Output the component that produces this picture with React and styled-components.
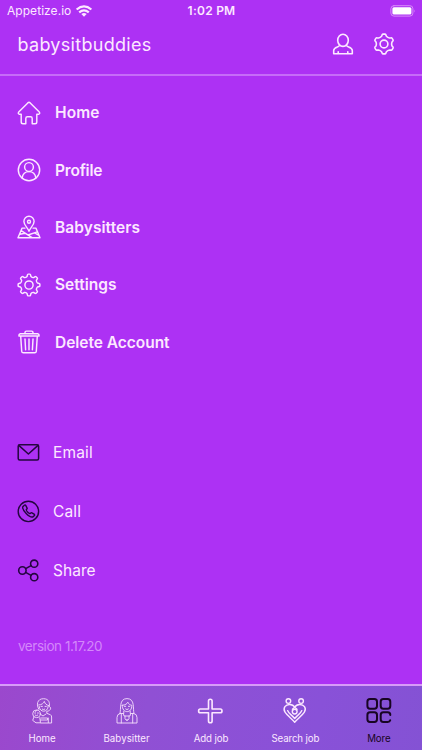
import React from 'react';
import styled, { createGlobalStyle } from 'styled-components';

const GlobalStyle = createGlobalStyle`
  * { box-sizing: border-box; }
  body { margin: 0; background: #ad31f4; }
`;

const Screen = styled.div`
  width: 100%;
  height: 750px;
  display: flex;
  flex-direction: column;
  overflow: hidden;
  background: #ad31f4;
  color: #fce8ff;
  font-family: Inter, "Open Sans", sans-serif;
`;

const StatusBar = styled.header`
  height: 22px;
  flex: none;
  display: grid;
  grid-template-columns: 1fr auto 1fr;
  align-items: center;
  padding: 0 6px 0 7px;
  font-size: 12px;
  line-height: 22px;
`;

const Carrier = styled.div`
  display: flex;
  align-items: center;
  gap: 5px;
  letter-spacing: 0.05px;
  svg { margin-bottom: 1px; }
`;

const Clock = styled.div`
  font-weight: 600;
  letter-spacing: 0.25px;
`;

const Battery = styled.div`
  display: flex;
  justify-content: flex-end;
`;

const Header = styled.div`
  height: 54px;
  flex: none;
  display: flex;
  align-items: center;
  justify-content: space-between;
  padding: 0 26px 8px 17.5px;
  border-bottom: 2px solid #c66cf8;
`;

const Title = styled.h1`
  margin: 0;
  font-size: 18px;
  font-weight: 400;
  letter-spacing: ${(p) => p.$tracking}px;
`;

const HeaderActions = styled.div`
  display: flex;
  gap: 17px;
`;

const Menu = styled.nav`
  display: flex;
  flex-direction: column;
  padding: 8px 17px 0;
`;

const MenuItem = styled.a`
  display: flex;
  align-items: center;
  gap: 14px;
  height: 57.4px;
  font-size: 15.5px;
  font-weight: 600;
  letter-spacing: ${(p) => p.$tracking}px;
`;

const Contacts = styled.div`
  display: flex;
  flex-direction: column;
  margin-top: 52px;
  padding: 0 17px;
`;

const ContactItem = styled.a`
  display: flex;
  align-items: center;
  gap: 13px;
  height: 59px;
  font-size: 15.5px;
  letter-spacing: ${(p) => p.$tracking}px;
  svg { color: #24063f; }
`;

const Version = styled.div`
  margin: auto 18px 28px;
  font-size: 13.5px;
  line-height: 20px;
  color: #d487fa;
  letter-spacing: ${(p) => p.$tracking}px;
`;

const TabBar = styled.footer`
  height: 66px;
  flex: none;
  display: grid;
  grid-template-columns: repeat(5, 1fr);
  border-top: 2px solid #d79bf8;
  background: linear-gradient(100deg, #9b48cd 0%, #9050d4 35%, #8951d8 75%, #8452d4 100%);
`;

const Tab = styled.a`
  display: flex;
  flex-direction: column;
  align-items: center;
  padding-top: 10px;
  gap: 6px;
  font-size: 9.7px;
  line-height: 14px;
  letter-spacing: ${(p) => p.$tracking}px;
  color: ${(p) => (p.$active ? '#180523' : '#fce8ff')};
  padding-right: ${(p) => (p.$active ? 2 : 0)}px;
  svg { height: 30px; }
`;

const Icon = styled.svg.attrs({ fill: 'none', stroke: 'currentColor', strokeLinecap: 'round', strokeLinejoin: 'round' })`
  display: block;
  flex: none;
  overflow: visible;
`;

function gearPath(teeth, outer, inner, c = 12) {
  const step = (Math.PI * 2) / teeth;
  const pt = (r, a) => `${(c + r * Math.sin(a)).toFixed(2)} ${(c - r * Math.cos(a)).toFixed(2)}`;
  let d = '';
  for (let i = 0; i < teeth; i += 1) {
    const a = i * step;
    d += `${i ? 'L' : 'M'}${pt(inner, a - step * 0.29)}`;
    d += `L${pt(outer - 0.6, a - step * 0.19)}Q${pt(outer, a - step * 0.17)} ${pt(outer, a - step * 0.1)}`;
    d += `L${pt(outer, a + step * 0.1)}Q${pt(outer, a + step * 0.17)} ${pt(outer - 0.6, a + step * 0.19)}`;
    d += `L${pt(inner, a + step * 0.29)}Q${pt(inner - 0.8, a + step * 0.5)} ${pt(inner, a + step * 0.71)}`;
  }
  return `${d}Z`;
}

const WifiIcon = () => (
  <Icon width="16" height="12" viewBox="0 0 15 11" strokeWidth="2.1">
    <path d="M.6 4.1Q7.5-1.8 14.4 4.1M3 6.8Q7.5 3 12 6.8" strokeLinecap="butt" />
    <path d="M5 8.4Q7.5 6.3 10 8.4L7.5 11Z" fill="currentColor" stroke="none" />
  </Icon>
);
const BatteryIcon = () => (
  <Icon width="26" height="12" viewBox="0 0 26 12">
    <rect x=".9" y=".7" width="22" height="10.4" rx="3" stroke="#d88bfa" />
    <rect x="2.4" y="2.2" width="19" height="7.4" rx="1.5" fill="#fff" stroke="none" />
    <path d="M24.2 4.4Q25.5 5.9 24.2 7.4Z" fill="#d88bfa" stroke="none" />
  </Icon>
);
const PersonIcon = () => (
  <Icon width="24" height="24" viewBox="0 0 24 24" strokeWidth="1.6">
    <ellipse cx="12" cy="8.3" rx="5.3" ry="6.1" />
    <path d="M8.3 13.7C8 15.2 2.7 15 2.7 18.6V21.8H21.3V18.6C21.3 15 16 15.2 15.7 13.7M7.2 19.8V21.6M16.8 19.8V21.6" />
  </Icon>
);
const CogIcon = () => (
  <Icon width="24" height="24" viewBox="0 0 24 24" strokeWidth="1.6">
    <path d={gearPath(6, 9.9, 8.1)} /><circle cx="12" cy="12" r="3.9" />
  </Icon>
);
const HomeIcon = () => (
  <Icon width="24" height="24" viewBox="0 0 24 24" strokeWidth="1.45">
    <path d="M4.2 13.3H2.4Q.5 12.6 1.7 11.1L10.8 1.9Q12 .8 13.2 1.9L22.3 11.1Q23.5 12.6 21.6 13.3H19.8V21Q19.8 22.8 18 22.8H15.2V17.4Q15.2 15.8 13.6 15.8H10.4Q8.8 15.8 8.8 17.4V22.8H6Q4.2 22.8 4.2 21Z" />
  </Icon>
);
const ProfileIcon = () => (
  <Icon width="24" height="24" viewBox="0 0 24 24" strokeWidth="1.45">
    <circle cx="12" cy="12" r="10.7" /><circle cx="12" cy="9" r="4.4" />
    <path d="M5.1 20.1C5.7 15.9 8.1 13.6 12 13.6S18.3 15.9 18.9 20.1" />
  </Icon>
);
const MapIcon = () => (
  <Icon width="24" height="24" viewBox="0 0 24 24" strokeWidth="1.4">
    <path d="M12 16.3C10.8 13 6.9 10.1 6.9 6.4A5.1 5.1 0 0 1 17.1 6.4C17.1 10.1 13.2 13 12 16.3Z" />
    <circle cx="12" cy="6.7" r="1.5" />
    <path d="M8 13.1H5.1L1 22.8H23L18.9 13.1H16M4.2 15.7L15.1 22.6M2.8 19.2L8 18.2M11 20L20.3 16.8M17.6 17.9L22 20.5" />
  </Icon>
);
const SettingsIcon = () => (
  <Icon width="24" height="24" viewBox="0 0 24 24" strokeWidth="1.45">
    <path d={gearPath(8, 10.9, 8.7)} /><circle cx="12" cy="12" r="4.1" />
  </Icon>
);
const TrashIcon = () => (
  <Icon width="24" height="24" viewBox="0 0 24 24" strokeWidth="1.45">
    <path d="M8 3.7V2.5Q8 1.1 9.4 1.1H14.6Q16 1.1 16 2.5V3.7M3.2 3.8H20.8Q22.3 4 22.1 6H1.9Q1.7 4 3.2 3.8ZM3.7 6L4.7 21.2Q4.8 22.8 6.4 22.8H17.6Q19.2 22.8 19.3 21.2L20.3 6M8 9L8.6 19.8M12 9V19.8M16 9L15.4 19.8" />
  </Icon>
);
const EmailIcon = () => (
  <Icon width="23" height="23" viewBox="0 0 23 23" strokeWidth="1.5">
    <rect x="1.2" y="3.7" width="20.4" height="15.4" rx="1.5" />
    <path d="M1.8 4.4L11.4 13L21 4.4" />
  </Icon>
);
const CallIcon = () => (
  <Icon width="23" height="23" viewBox="0 0 23 23" strokeWidth="1.4">
    <circle cx="11.4" cy="11.4" r="10.2" />
    <path d="M7.4 5.2L5.8 6.8C4.8 9.6 12.4 18.3 16.1 16.8L17.4 15.5Q17.9 14.8 17.1 14.1L14.9 12.8Q14.2 12.4 13.6 13.2C12.6 14.7 8.5 10.3 9.5 9.3Q10.5 8.7 10 7.8L8.7 5.4Q8.1 4.5 7.4 5.2Z" />
  </Icon>
);
const ShareIcon = () => (
  <Icon width="23" height="23" viewBox="0 0 23 23" strokeWidth="1.6">
    <circle cx="5.4" cy="11.5" r="3.7" /><circle cx="17.2" cy="4.7" r="3.6" /><circle cx="17.2" cy="18.2" r="3.6" />
    <path d="M8.6 9.6L14.1 6.6M8.6 13.4L14.1 16.4" />
  </Icon>
);
const MotherIcon = () => (
  <Icon width="22" height="30" viewBox="0 0 22 30" strokeWidth=".95" opacity=".9">
    <path d="M8 13.5C5 9 6 2.7 12.5 2.7C18 2.7 19 7 18.2 10.3C21.5 12.4 18.3 15.5 15.8 15.2V17.3L19.5 18.8Q20.6 19.4 20.6 21V27H9.8" />
    <path d="M7.6 9C11 9 12.6 6.9 13.3 5.4C14 8 15.5 9 17.7 9.6M8.2 10.5C8.6 17 16.8 16.8 17.2 10.4M10 10.4H11.4M14 10.4H15.3M11.3 13.2Q12.6 14.2 13.8 13.2" />
    <circle cx="5.5" cy="17.8" r="3.8" />
    <path d="M3.7 17H4.6M6.5 17H7.4M4.2 19.2Q5.5 20.3 6.7 19.2M3 20.8L1.7 24.4L5 26.8H9.5L8.8 21.7M9.4 18.2L12 20L15 18M10 22H16.5V24H9.5M17.3 22V26.6M4.4 15.3L6 14.4" />
  </Icon>
);
const SitterIcon = () => (
  <Icon width="22" height="30" viewBox="0 0 22 30" strokeWidth=".95" opacity=".9">
    <path d="M4 17.5C5.3 13 2.7 2.6 11 2.6S16.7 13 18 17.5H14.2V15M4 17.5H7.8V15" />
    <path d="M6.3 9.3C9.5 9 11 7.9 11.8 6.2C12.5 8 14 9 15.8 9.3C16.1 17.8 5.9 17.8 6.3 9.3ZM8.3 10.3H9.7M12.4 10.3H13.8M9.6 13Q11 14.5 12.4 13" />
    <path d="M4 17.5Q1 18 1 21.5V27H21V21.5Q21 18 18 17.5M7.4 17.6L8 20H14L14.6 17.6M5.3 18V27M16.7 18V27M9 20V22.5Q11 26.5 13 22.5V20M11 23.3V24" />
  </Icon>
);
const AddIcon = () => (
  <Icon width="27" height="30" viewBox="0 0 27 30" strokeWidth="1.6">
    <path d="M11.5 13V5Q11.5 3.2 13.3 3.2T15.1 5V13H23.3Q25 13 25 14.9T23.3 16.8H15.1V25Q15.1 26.8 13.3 26.8T11.5 25V16.8H3.3Q1.6 16.8 1.6 14.9T3.3 13Z" />
  </Icon>
);
const HeartIcon = () => (
  <Icon width="24" height="30" viewBox="0 0 24 30" strokeWidth="1.4">
    <circle cx="5.4" cy="5.1" r="2.3" /><circle cx="18.1" cy="5.1" r="2.3" />
    <path d="M11.7 11.2C9.5 7.6 4.1 7.6 1.9 10.7C-1.5 15.6 5.9 20 11.7 26.2C17.5 20 24.9 15.6 21.5 10.7C19.3 7.6 13.9 7.6 11.7 11.2Z" />
    <circle cx="11.7" cy="15.6" r="2.4" />
    <path d="M11.7 11.2L9.4 13.3M11.7 11.2L14 13.3M4.6 14.6C6 18.2 9 18.8 11.7 22.6C14.4 18.8 17.4 18.2 18.8 14.6" />
  </Icon>
);
const MoreIcon = () => (
  <Icon width="26" height="30" viewBox="0 0 26 30" strokeWidth="2">
    <rect x="1.4" y="3.1" width="9.6" height="9.6" rx="2.6" />
    <rect x="14.7" y="3.1" width="9.6" height="9.6" rx="2.6" />
    <rect x="1.4" y="16.3" width="9.6" height="9.6" rx="2.6" />
    <path d="M24.3 18.9Q24.3 16.3 21.7 16.3H17.3Q14.7 16.3 14.7 18.9V23.3Q14.7 25.9 17.3 25.9H21.7Q23.8 25.9 24.2 24.2" />
  </Icon>
);

const menu = [
  { label: 'Home', icon: HomeIcon, tracking: 0.1 },
  { label: 'Profile', icon: ProfileIcon, tracking: -0.2 },
  { label: 'Babysitters', icon: MapIcon, tracking: 0.07 },
  { label: 'Settings', icon: SettingsIcon, tracking: 0 },
  { label: 'Delete Account', icon: TrashIcon, tracking: -0.03 },
];
const contacts = [
  { label: 'Email', icon: EmailIcon, tracking: 0.15 },
  { label: 'Call', icon: CallIcon, tracking: 0.15 },
  { label: 'Share', icon: ShareIcon, tracking: 0.05 },
];
const tabs = [
  { label: 'Home', icon: MotherIcon, tracking: 0 },
  { label: 'Babysitter', icon: SitterIcon, tracking: 0.05 },
  { label: 'Add job', icon: AddIcon, tracking: -0.1 },
  { label: 'Search job', icon: HeartIcon, tracking: -0.1 },
  { label: 'More', icon: MoreIcon, tracking: -0.1, active: true },
];

export default function App() {
  return (
    <Screen>
      <GlobalStyle />
      <StatusBar>
        <Carrier>Appetize.io <WifiIcon /></Carrier>
        <Clock>1:02 PM</Clock>
        <Battery><BatteryIcon /></Battery>
      </StatusBar>
      <Header>
        <Title $tracking={0.3}>babysitbuddies</Title>
        <HeaderActions><PersonIcon /><CogIcon /></HeaderActions>
      </Header>
      <Menu>
        {menu.map(({ label, icon: Glyph, tracking }) => (
          <MenuItem key={label} $tracking={tracking}><Glyph />{label}</MenuItem>
        ))}
      </Menu>
      <Contacts>
        {contacts.map(({ label, icon: Glyph, tracking }) => (
          <ContactItem key={label} $tracking={tracking}><Glyph />{label}</ContactItem>
        ))}
      </Contacts>
      <Version $tracking={-0.45}>version 1.17.20</Version>
      <TabBar>
        {tabs.map(({ label, icon: Glyph, tracking, active }) => (
          <Tab key={label} $tracking={tracking} $active={active}><Glyph />{label}</Tab>
        ))}
      </TabBar>
    </Screen>
  );
}
